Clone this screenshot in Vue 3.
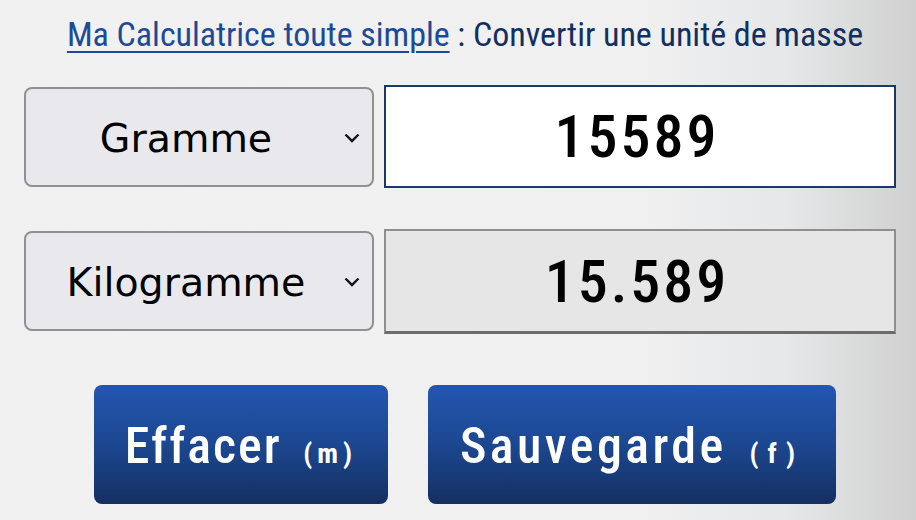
<template>
  <div class="page">
    <h1 class="title">
      <a href="#" class="home-link">Ma Calculatrice toute simple</a> : Convertir une unité de masse
    </h1>
    <div v-for="row in rows" :key="row.unit" class="row">
      <div class="select-wrap">
        <select class="unit">
          <option>{{ row.unit }}</option>
        </select>
        <svg class="chevron" viewBox="0 0 16 10" width="16" height="10">
          <path d="M1.5 1.5 L8 8 L14.5 1.5" fill="none" stroke="#111" stroke-width="2.4" />
        </svg>
      </div>
      <input class="value" :class="{ result: row.readonly }" :value="row.value" :readonly="row.readonly" />
    </div>
    <div class="actions">
      <button class="btn clear">Effacer <span class="key">(m)</span></button>
      <button class="btn save">Sauvegarde <span class="key">(f)</span></button>
    </div>
  </div>
</template>

<script setup>
const rows = [
  { unit: 'Gramme', value: '15589', readonly: false },
  { unit: 'Kilogramme', value: '15.589', readonly: true }
]
</script>

<style>
html,
body {
  margin: 0;
  height: 100%;
}
</style>

<style scoped>
.page {
  width: 916px;
  height: 520px;
  box-sizing: border-box;
  overflow: hidden;
  padding: 0 20px 0 24px;
  background: linear-gradient(90deg, #f1f1f2 0%, #f0f0f1 70%, #e6e7e8 86%, #d0d0d0 100%);
  font-family: "Roboto Condensed", sans-serif;
}

.title {
  margin: 0;
  height: 85px;
  box-sizing: border-box;
  padding: 15px 0 0 10px;
  font-size: 34px;
  line-height: 38px;
  font-weight: 400;
  letter-spacing: -0.03px;
  white-space: nowrap;
  text-align: center;
  color: #12305f;
}

.home-link {
  color: #1d4a94;
  text-decoration: underline;
  text-decoration-thickness: 2px;
  text-underline-offset: 5px;
}

.row {
  display: flex;
  align-items: flex-start;
  gap: 10px;
  height: 105px;
  margin-bottom: 39px;
}

.select-wrap {
  position: relative;
  width: 350px;
  height: 100px;
  margin-top: 2px;
  flex: none;
}

.unit {
  appearance: none;
  display: block;
  width: 100%;
  height: 100%;
  box-sizing: border-box;
  padding: 2px 26px 0 0;
  border: 2px solid #8f8f94;
  border-radius: 8px;
  background: #e9e9ed;
  color: #000;
  font-family: "DejaVu Sans", sans-serif;
  font-size: 39.5px;
  text-align: center;
}

.chevron {
  position: absolute;
  right: 14px;
  top: 46px;
  pointer-events: none;
}

.value {
  flex: none;
  width: 512px;
  height: 103px;
  box-sizing: border-box;
  padding: 0 6px 0 0;
  border: 2px solid #1b3a63;
  background: #fff;
  color: #000;
  font-family: "Roboto Condensed", sans-serif;
  font-size: 60px;
  font-weight: 500;
  letter-spacing: 3px;
  text-align: center;
  outline: none;
}

.value.result {
  height: 105px;
  border-color: #8f8f8f;
  border-bottom: 3px solid #6c6c6c;
  background: #e6e6e6;
}

.actions {
  display: flex;
  justify-content: center;
  gap: 40px;
  padding-left: 10px;
  margin-top: 51px;
}

.btn {
  height: 119px;
  padding: 3px 0 0 0;
  border: 0;
  border-radius: 8px;
  background: linear-gradient(180deg, #2456b1 0%, #1c4790 50%, #152f62 100%);
  color: #fff;
  font-family: "Roboto Condensed", sans-serif;
  font-size: 50px;
  font-weight: 500;
}

.clear {
  width: 294px;
  letter-spacing: 2px;
}

.save {
  width: 408px;
  letter-spacing: 3.4px;
}

.key {
  font-size: 28px;
  font-weight: 700;
  margin-left: 8px;
}

.clear .key {
  letter-spacing: 5px;
}

.save .key {
  letter-spacing: 9px;
}
</style>
